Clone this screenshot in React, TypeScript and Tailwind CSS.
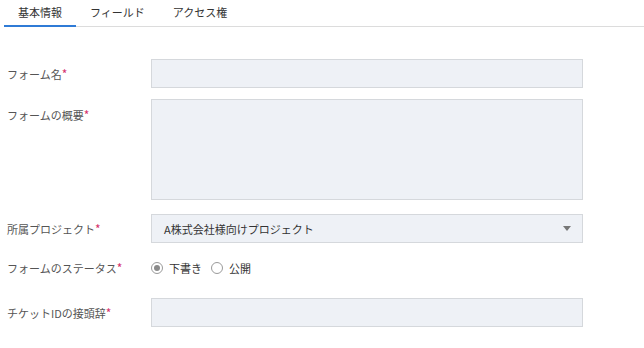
import { useState } from 'react'

const font = { fontFamily: '"Noto Sans CJK JP", "Noto Sans", sans-serif' }

function Label({ text, top }: { text: string; top?: boolean }) {
  return (
    <div className={`w-[144px] shrink-0 text-[11px] leading-[14px] text-[#555] ${top ? 'self-start pt-[9px]' : ''}`}>
      {text}
      <span className="text-[#d6336c] text-[12px]">*</span>
    </div>
  )
}

function Radio({ checked, label, onClick }: { checked: boolean; label: string; onClick: () => void }) {
  return (
    <button onClick={onClick} className="flex items-center gap-[6px] text-[11px] leading-[14px] text-[#333]">
      <span className="w-[12px] h-[12px] rounded-full border border-[#9a9a9a] bg-white flex items-center justify-center">
        {checked && <span className="w-[6px] h-[6px] rounded-full bg-[#8a8a8a]" />}
      </span>
      {label}
    </button>
  )
}

export default function App() {
  const [tab, setTab] = useState(0)
  const [status, setStatus] = useState('draft')
  const tabs = ['基本情報', 'フィールド', 'アクセス権']

  return (
    <div className="w-[644px] h-[348px] bg-white overflow-hidden" style={font}>

      {/* Tabs */}
      <div className="flex h-[27px]">
        <div className="w-[4px] border-b border-white" />
        <div className="flex flex-1 border-b border-[#dcdcdc]">
          {tabs.map((t, i) => (
            <button
              key={t}
              onClick={() => setTab(i)}
              className={`px-[14px] text-[11px] leading-[14px] text-[#333] pb-[2px] border-b-2 -mb-px ${tab === i ? 'border-[#2f7bd6]' : 'border-transparent'}`}
            >
              {t}
            </button>
          ))}
        </div>
      </div>

      {/* Form */}
      <div className="pl-[7px] pt-[32px] flex flex-col">
        <div className="flex items-center">
          <Label text="フォーム名" />
          <input className="w-[432px] h-[29px] bg-[#eef1f6] border border-[#d5d8dc] outline-none px-3 text-[11px]" />
        </div>

        <div className="flex items-start mt-[11px]">
          <Label text="フォームの概要" top />
          <textarea className="w-[432px] h-[101px] bg-[#eef1f6] border border-[#d5d8dc] outline-none px-3 text-[11px] resize-none" />
        </div>

        <div className="flex items-center mt-[14px]">
          <Label text="所属プロジェクト" />
          <div className="w-[432px] h-[29px] bg-[#eef1f6] border border-[#d5d8dc] flex items-center justify-between pl-[12px] pr-[11px]">
            <span className="text-[11px] leading-[14px] text-[#333]">A株式会社様向けプロジェクト</span>
            <svg width="8" height="5" viewBox="0 0 8 5">
              <path d="M0 0 H8 L4 5 Z" fill="#777" />
            </svg>
          </div>
        </div>

        <div className="flex items-center mt-[15px] h-[20px]">
          <Label text="フォームのステータス" />
          <div className="flex items-center gap-[9px]">
            <Radio checked={status === 'draft'} label="下書き" onClick={() => setStatus('draft')} />
            <Radio checked={status === 'public'} label="公開" onClick={() => setStatus('public')} />
          </div>
        </div>

        <div className="flex items-center mt-[20px]">
          <Label text="チケットIDの接頭辞" />
          <input className="w-[432px] h-[29px] bg-[#eef1f6] border border-[#d5d8dc] outline-none px-3 text-[11px]" />
        </div>
      </div>
    </div>
  )
}
